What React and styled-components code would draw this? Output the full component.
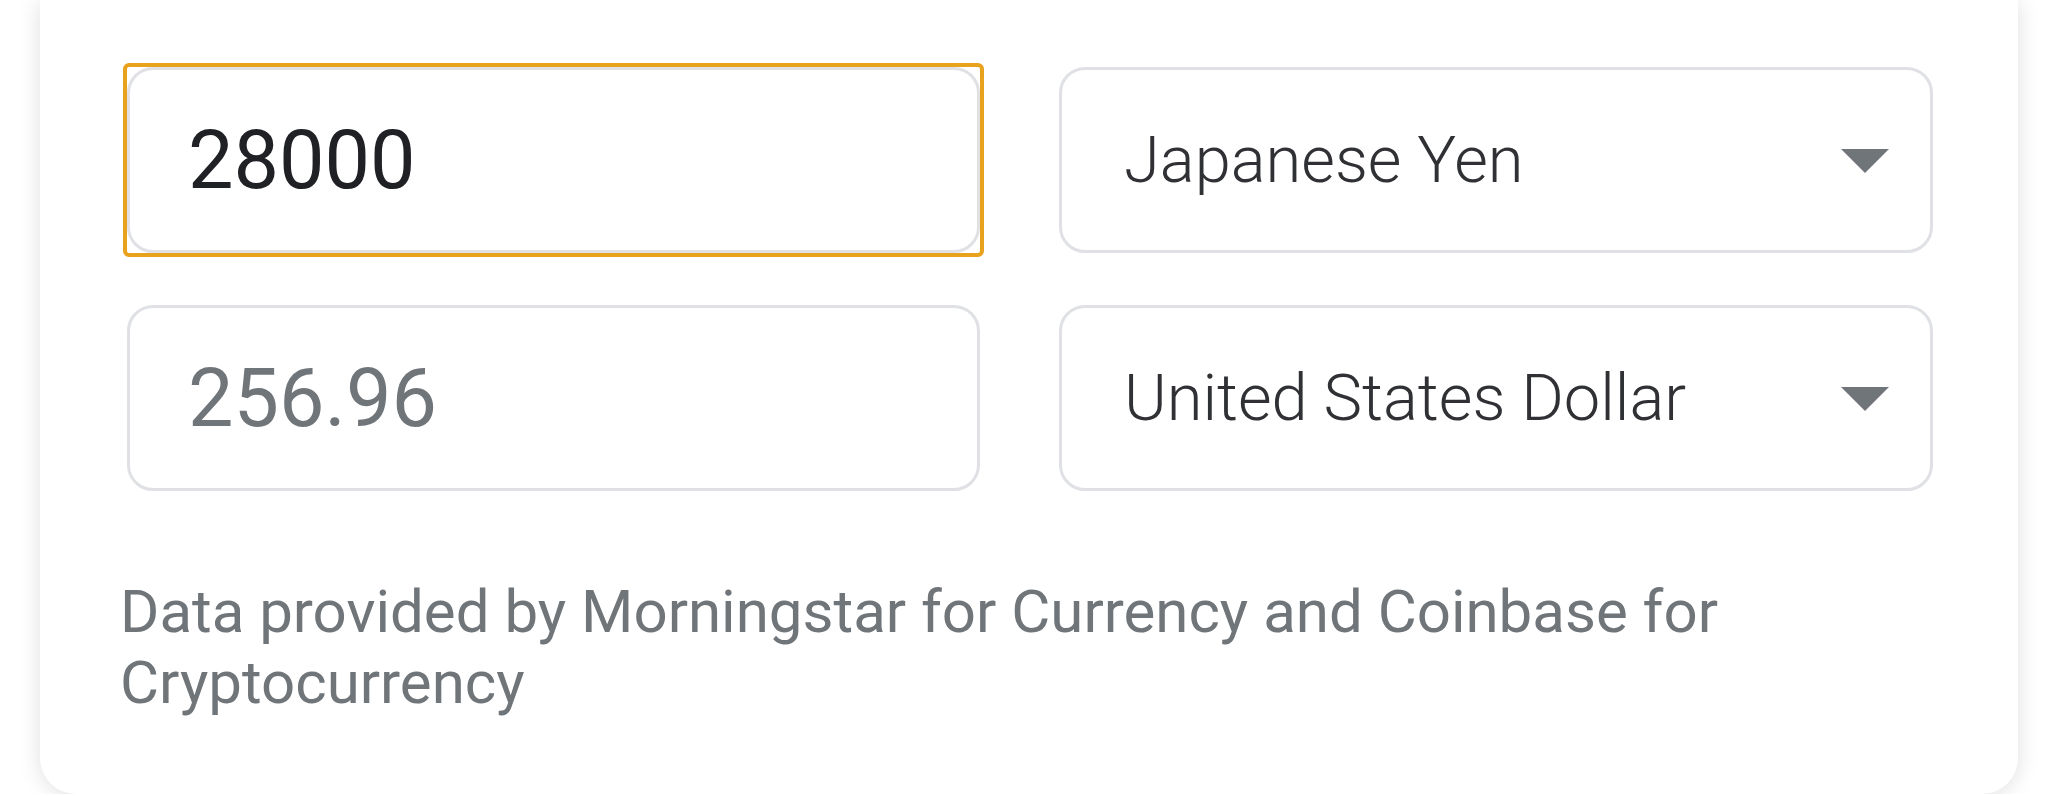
import React from 'react';
import styled, { createGlobalStyle, css } from 'styled-components';

const GlobalStyle = createGlobalStyle`
  html, body {
    margin: 0;
    padding: 0;
    background: #ffffff;
    font-family: Roboto, "Noto Sans", "Liberation Sans", sans-serif;
  }
  * {
    box-sizing: border-box;
  }
`;

const Card = styled.section`
  margin: 0 30px 0 40px;
  padding: 67px 85px 76px 87px;
  background: #ffffff;
  border-radius: 0 0 36px 36px;
  box-shadow: 0 2px 22px rgba(0, 0, 0, 0.13);
`;

const Grid = styled.div`
  display: grid;
  grid-template-columns: 853px 874px;
  column-gap: 79px;
  row-gap: 52px;
`;

const Field = styled.div`
  position: relative;
  height: 186px;

  ${p => p.$focused && css`
    &::after {
      content: "";
      position: absolute;
      inset: -4px -4px -4px -4px;
      border: 4px solid #e9a21e;
      border-radius: 6px;
      pointer-events: none;
    }
  `}
`;

const NumberInput = styled.input`
  display: block;
  width: 100%;
  height: 100%;
  margin: 0;
  padding: 0 58px;
  border: 3px solid #dfe1e5;
  border-radius: 26px;
  background: #ffffff;
  font-family: Roboto, "Noto Sans", "Liberation Sans", sans-serif;
  font-size: 81px;
  color: ${p => (p.$muted ? '#70757a' : '#202124')};
  outline: none;
`;

const Select = styled.div`
  display: flex;
  align-items: center;
  justify-content: space-between;
  height: 186px;
  padding: 0 41px 0 62px;
  border: 3px solid #dfe1e5;
  border-radius: 26px;
  background: #ffffff;
  font-size: 65px;
  font-weight: 300;
  color: #303134;
  cursor: pointer;
`;

const Label = styled.span`
  white-space: nowrap;
`;

const Caret = styled.svg`
  flex: none;
  width: 48px;
  height: 24px;
  margin-top: 2px;
  fill: #70757a;
`;

const Note = styled.p`
  margin: 85px 0 0 -7px;
  font-size: 60px;
  line-height: 71px;
  color: #70757a;
`;

function CurrencySelect({ label }) {
  return (
    <Select role="combobox" aria-label={label}>
      <Label>{label}</Label>
      <Caret viewBox="0 0 48 24">
        <path d="M0 0 H48 L24 24 Z" />
      </Caret>
    </Select>
  );
}

export default function App() {
  return (
    <>
      <GlobalStyle />
      <Card>
        <Grid>
          <Field $focused>
            <NumberInput type="text" value="28000" readOnly />
          </Field>
          <CurrencySelect label="Japanese Yen" />
          <Field>
            <NumberInput type="text" value="256.96" readOnly $muted />
          </Field>
          <CurrencySelect label="United States Dollar" />
        </Grid>
        <Note>
          Data provided by Morningstar for Currency and Coinbase for Cryptocurrency
        </Note>
      </Card>
    </>
  );
}
